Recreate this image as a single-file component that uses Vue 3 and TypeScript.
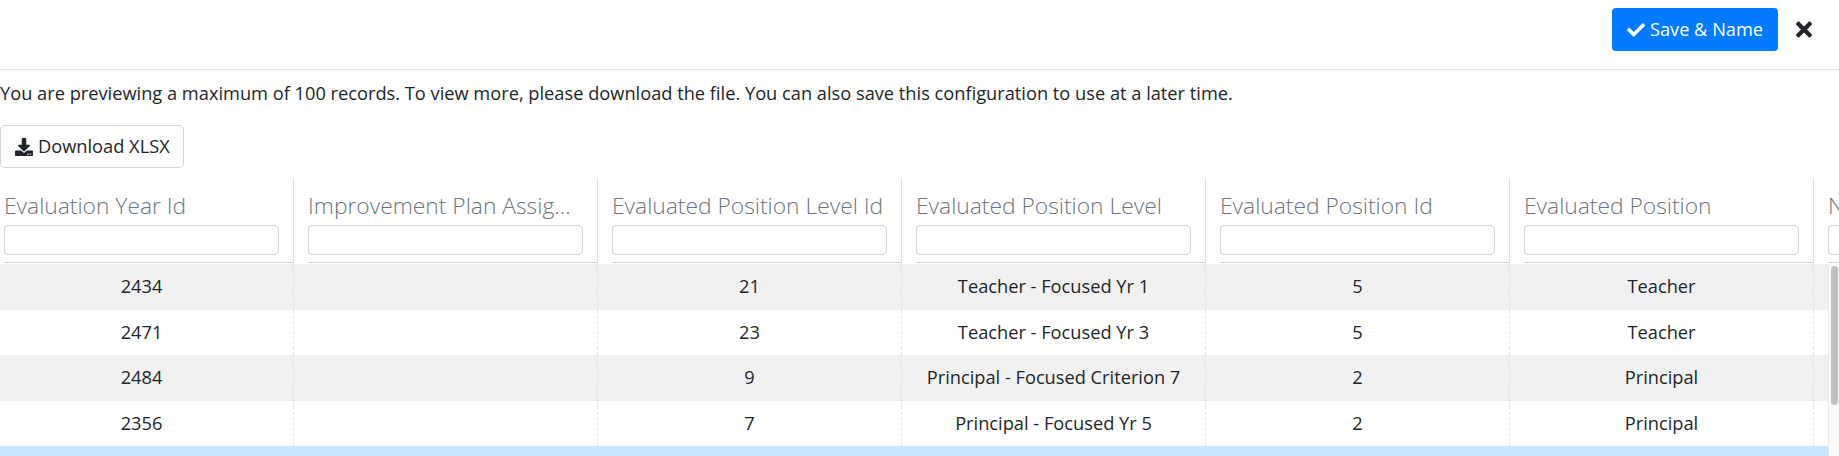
<script setup lang="ts">
const columns: string[] = [
  'Evaluation Year Id',
  'Improvement Plan Assigned',
  'Evaluated Position Level Id',
  'Evaluated Position Level',
  'Evaluated Position Id',
  'Evaluated Position',
  'Name',
]
const rows: string[][] = [
  ['2434', '', '21', 'Teacher - Focused Yr 1', '5', 'Teacher', ''],
  ['2471', '', '23', 'Teacher - Focused Yr 3', '5', 'Teacher', ''],
  ['2484', '', '9', 'Principal - Focused Criterion 7', '2', 'Principal', ''],
  ['2356', '', '7', 'Principal - Focused Yr 5', '2', 'Principal', ''],
  ['', '', '', '', '', '', ''],
]
</script>

<template>
  <div class="page">
    <header class="topbar">
      <button class="btn-save" type="button">
        <svg class="icon" viewBox="0 0 512 512" aria-hidden="true">
          <path fill="currentColor" d="M173.898 439.404l-166.4-166.4c-9.997-9.997-9.997-26.206 0-36.204l36.203-36.204c9.997-9.998 26.207-9.998 36.204 0L192 312.69 432.095 72.596c9.997-9.997 26.207-9.997 36.204 0l36.203 36.204c9.997 9.997 9.997 26.206 0 36.204l-294.4 294.401c-9.998 9.997-26.207 9.997-36.204-.001z" />
        </svg>
        Save &amp; Name
      </button>
      <button class="btn-close" type="button" aria-label="Close">
        <svg class="icon-close" viewBox="0 0 352 512" aria-hidden="true">
          <path fill="currentColor" d="M242.72 256l100.07-100.07c12.28-12.28 12.28-32.19 0-44.48l-22.24-22.24c-12.28-12.28-32.19-12.28-44.48 0L176 189.28 75.93 89.21c-12.28-12.28-32.19-12.28-44.48 0L9.21 111.45c-12.28 12.28-12.28 32.19 0 44.48L109.28 256 9.21 356.07c-12.28 12.28-12.28 32.19 0 44.48l22.24 22.24c12.28 12.28 32.2 12.28 44.48 0L176 322.72l100.07 100.07c12.28 12.28 32.2 12.28 44.48 0l22.24-22.24c12.28-12.28 12.28-32.19 0-44.48L242.72 256z" />
        </svg>
      </button>
    </header>

    <p class="notice">You are previewing a maximum of 100 records. To view more, please download the file. You can also save this configuration to use at a later time.</p>

    <button class="btn-download" type="button">
      <svg class="icon" viewBox="0 0 512 512" aria-hidden="true">
        <path fill="currentColor" d="M216 0h80c13.3 0 24 10.7 24 24v168h87.7c17.8 0 26.7 21.5 14.1 34.1L269.7 378.3c-7.5 7.5-19.8 7.5-27.3 0L90.1 226.1c-12.6-12.6-3.7-34.1 14.1-34.1H192V24c0-13.3 10.7-24 24-24zm296 376v112c0 13.3-10.7 24-24 24H24c-13.3 0-24-10.7-24-24V376c0-13.3 10.7-24 24-24h146.7l49 49c20.1 20.1 52.5 20.1 72.6 0l49-49H488c13.3 0 24 10.7 24 24zm-124 88c0-11-9-20-20-20s-20 9-20 20 9 20 20 20 20-9 20-20zm64 0c0-11-9-20-20-20s-20 9-20 20 9 20 20 20 20-9 20-20z" />
      </svg>
      Download XLSX
    </button>

    <div class="table-wrap">
      <table class="grid">
        <thead>
          <tr>
            <th v-for="col in columns" :key="col">
              <div class="th-inner">
                <div class="th-title">{{ col }}</div>
                <input class="th-filter" type="text" />
              </div>
            </th>
          </tr>
        </thead>
        <tbody>
          <tr v-for="(row, i) in rows" :key="i" :class="{ selected: i === 4, odd: i % 2 === 0 && i !== 4 }">
            <td v-for="(cell, j) in row" :key="j">{{ cell }}</td>
          </tr>
        </tbody>
      </table>
      <div class="scrollbar"><div class="thumb"></div></div>
    </div>
  </div>
</template>

<style>
html, body { margin: 0; height: 456px; overflow: hidden; background: #fff; }
</style>

<style scoped>
.page {
  width: 1839px;
  height: 456px;
  overflow: hidden;
  font-family: "Open Sans", sans-serif;
  font-size: 18.24px;
  line-height: 27px;
  color: #212529;
  display: flex;
  flex-direction: column;
  align-items: flex-start;
}
.topbar {
  box-sizing: border-box;
  width: 100%;
  height: 70px;
  flex: none;
  border-bottom: 1px solid #dee2e6;
  display: flex;
  justify-content: flex-end;
  align-items: flex-start;
  padding: 8px 27px 0 0;
  gap: 18px;
}
.btn-save {
  box-sizing: border-box;
  width: 166px;
  height: 43px;
  background: #007bff;
  color: #fff;
  border: 0;
  border-radius: 4px;
  font: inherit;
  display: flex;
  align-items: center;
  justify-content: center;
  gap: 5px;
}
.icon { width: 18px; height: 18px; flex: none; }
.btn-close {
  border: 0;
  background: none;
  padding: 0;
  margin-top: 10px;
  color: #212529;
  height: 23px;
  display: flex;
}
.icon-close { width: 16px; height: 23px; }
.notice {
  margin: 0 0 18px;
  padding-top: 10px;
  flex: none;
  white-space: nowrap;
}
.btn-download {
  box-sizing: border-box;
  width: 184px;
  height: 43px;
  padding: 0 0 0 14px;
  flex: none;
  background: #fff;
  color: #212529;
  border: 1px solid #ced4da;
  border-radius: 5px;
  font: inherit;
  display: flex;
  align-items: center;
  gap: 5px;
  white-space: nowrap;
}
.table-wrap {
  position: relative;
  margin-top: 10px;
  width: 1839px;
  flex: 1;
  overflow: hidden;
}
.grid {
  border-collapse: separate;
  border-spacing: 0;
  table-layout: fixed;
  width: 2128px;
  margin-left: -10px;
}
.grid th {
  box-sizing: border-box;
  width: 304px;
  height: 86px;
  padding: 0 0 1px;
  font-weight: 300;
  text-align: left;
  vertical-align: top;
  border-right: 1px solid #dee2e6;
}
.th-inner {
  box-sizing: border-box;
  height: 85px;
  margin-left: 14px;
  padding-top: 11px;
  border-bottom: 1px solid #ced4da;
}
.th-title {
  font-size: 22.8px;
  line-height: 34px;
  color: #6c757d;
  width: 275px;
  white-space: nowrap;
  overflow: hidden;
  text-overflow: ellipsis;
}
.th-filter {
  display: block;
  box-sizing: border-box;
  width: 275px;
  height: 30px;
  margin-top: 2px;
  border: 1px solid #ced4da;
  border-radius: 4px;
  background: #fff;
  padding: 0;
}
.grid td {
  box-sizing: border-box;
  height: 45.5px;
  padding: 0;
  text-align: center;
  vertical-align: middle;
  border-right: 1px dashed #dee2e6;
}
.grid tr.odd td { background: #f1f1f1; }
.grid tr.selected td { background: #cce5ff; }
.scrollbar {
  position: absolute;
  left: 1828px;
  top: 86px;
  width: 11px;
  bottom: 0;
  background: #fafafa;
  border-left: 1px solid #e8e8e8;
  box-sizing: border-box;
}
.thumb {
  position: absolute;
  left: 2px;
  top: 2px;
  width: 7px;
  height: 139px;
  border-radius: 4px;
  background: #c1c1c1;
}
</style>
